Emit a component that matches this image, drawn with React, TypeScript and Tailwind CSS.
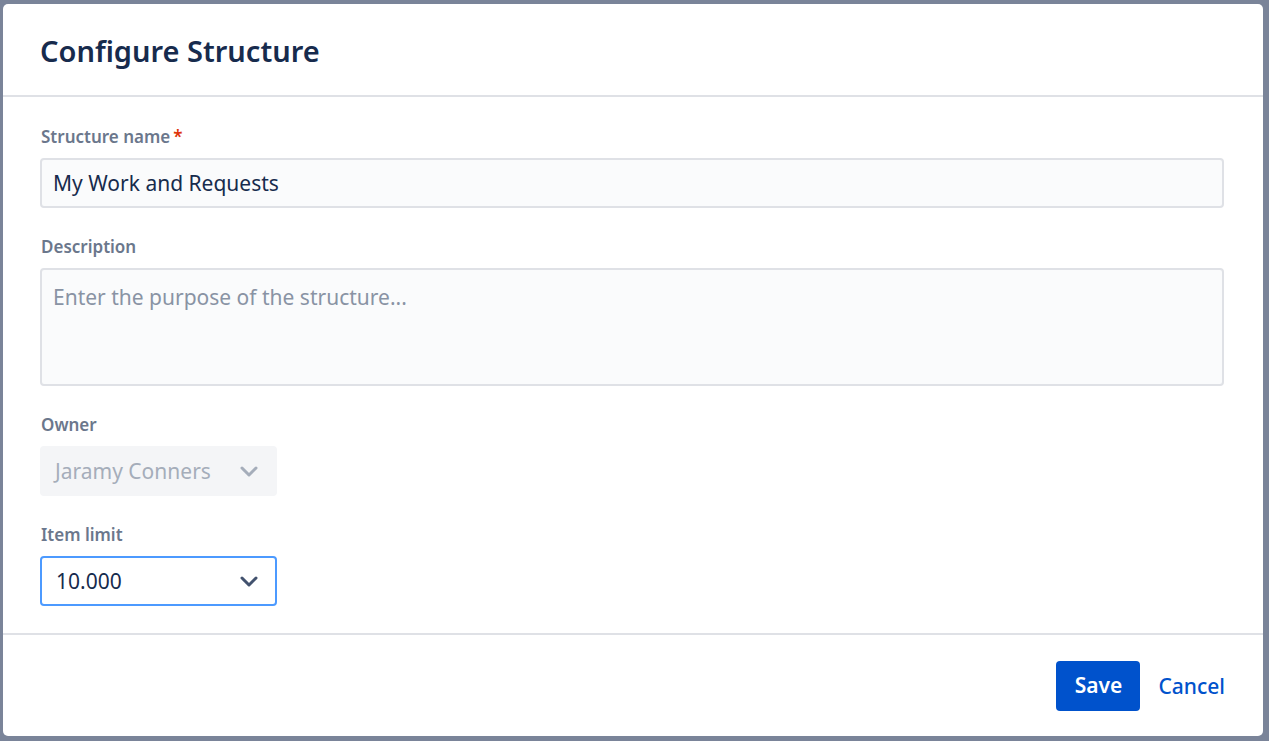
import React from "react";

function Chevron({ color }: { color: string }) {
  return (
    <svg width="24" height="24" viewBox="0 0 24 24" fill="none">
      <path d="M5 9l7 7 7-7" stroke={color} strokeWidth="3" strokeLinecap="round" strokeLinejoin="round" />
    </svg>
  );
}

export default function App() {
  return (
    <div
      className="w-[1269px] h-[741px] bg-[#7a8499] pt-[4px] pl-[3px]"
      style={{ fontFamily: '"Noto Sans", "Open Sans", sans-serif' }}
    >
      <div className="w-[1260px] h-[732px] bg-white rounded-[5px] flex flex-col">
        <div className="h-[93px] border-b-2 border-[#dfe1e6] flex items-center px-[37px] pt-[1px]">
          <h1 className="text-[29px] font-semibold text-[#172b4d] leading-none">Configure Structure</h1>
        </div>
        <div className="flex-1 px-[37px] pt-[27px] pb-[24px] flex flex-col gap-[26px]">
          <div className="flex flex-col">
            <div className="h-[24px] mb-[10px] pt-[2px] flex items-center text-[17px] font-semibold text-[#6b778c] pl-[1px]">
              Structure name<span className="text-[#de350b] ml-[3px]">*</span>
            </div>
            <div className="h-[50px] w-[1184px] border-2 border-[#dfe1e6] bg-[#fafbfc] rounded-[4px] flex items-center px-[11px] pt-[2px] text-[21px] text-[#172b4d]">
              My Work and Requests
            </div>
          </div>
          <div className="flex flex-col">
            <div className="h-[24px] mb-[10px] pt-[2px] flex items-center text-[17px] font-semibold text-[#6b778c] pl-[1px]">
              Description
            </div>
            <div className="h-[118px] w-[1184px] border-2 border-[#dfe1e6] bg-[#fafbfc] rounded-[4px] px-[11px] pt-[13px] text-[21px] text-[#8993a4] leading-[28px]">
              Enter the purpose of the structure...
            </div>
          </div>
          <div className="flex flex-col">
            <div className="h-[24px] mb-[10px] pt-[2px] flex items-center text-[17px] font-semibold text-[#6b778c] pl-[1px]">
              Owner
            </div>
            <div className="h-[50px] w-[237px] bg-[#f4f5f7] rounded-[4px] flex items-center justify-between pl-[15px] pr-[16px] text-[21px] text-[#a5adba]">
              <span className="pt-[2px]">Jaramy Conners</span>
              <Chevron color="#a5adba" />
            </div>
          </div>
          <div className="flex flex-col">
            <div className="h-[24px] mb-[10px] pt-[2px] flex items-center text-[17px] font-semibold text-[#6b778c] pl-[1px]">
              Item limit
            </div>
            <div className="h-[50px] w-[237px] border-2 border-[#4c9aff] bg-white rounded-[4px] flex items-center justify-between pl-[14px] pr-[14px] text-[21px] text-[#172b4d]">
              <span className="pt-[2px]">10.000</span>
              <Chevron color="#42526e" />
            </div>
          </div>
        </div>
        <div className="h-[103px] border-t-2 border-[#dfe1e6] flex items-start justify-end pt-[26px] pr-[38px]">
          <div className="flex items-center gap-[18px]">
            <button className="h-[50px] w-[84px] bg-[#0052cc] rounded-[4px] text-white text-[21px] font-semibold">Save</button>
            <button className="text-[#0052cc] text-[21px] font-medium pt-[2px]">Cancel</button>
          </div>
        </div>
      </div>
    </div>
  );
}
